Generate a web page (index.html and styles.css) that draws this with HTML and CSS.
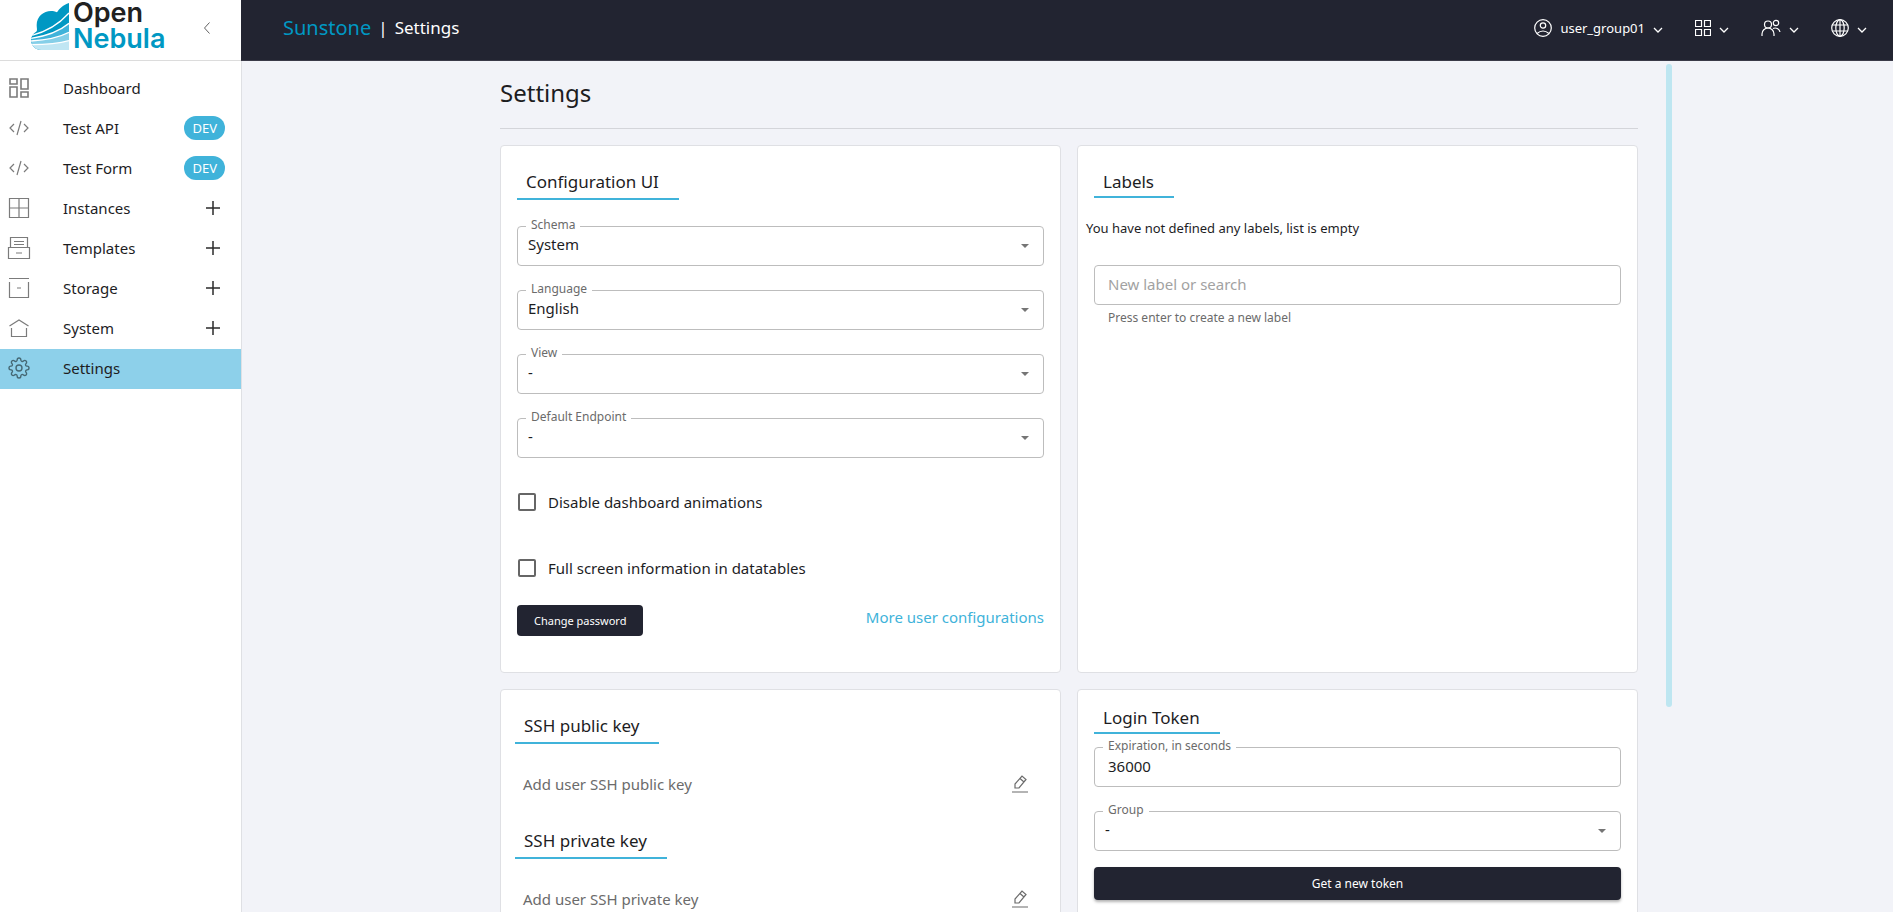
FILE: index.html
```html
<!DOCTYPE html>
<html lang="en">
<head>
<meta charset="utf-8">
<title>Settings | Sunstone</title>
<link rel="stylesheet" href="styles.css">
</head>
<body>
<svg class="sprite" aria-hidden="true">
  <symbol id="chevron" viewBox="0 0 10 6"><path d="M1 1l4 4 4-4"/></symbol>
  <symbol id="plus" viewBox="0 0 14 14"><path d="M7 0v14M0 7h14"/></symbol>
  <symbol id="code" viewBox="0 0 20 20"><path d="M5 6L1 10l4 4M15 6l4 4-4 4M12 3L8 17"/></symbol>
  <symbol id="edit" viewBox="0 0 16 18"><path d="M0 17h16M3 13V9l7-8 4 3.500L7 13zM8 3.500l4 3.500"/></symbol>
</svg>
<div class="app">
  <aside class="sidebar">
    <div class="brand">
      <a class="logo" href="#" aria-label="OpenNebula">
        <svg class="cloud" viewBox="93 9 114 141" aria-hidden="true">
          <defs><clipPath id="cloud-shape"><path d="M207 9C190 14 178 26 171 37C145 24 110 42 110 75C110 84 112 88 110 94C98 102 93 112 93 120C94 138 108 150 125 150H207Z"/></clipPath></defs>
          <g clip-path="url(#cloud-shape)">
            <path fill="#0098c3" d="M93 9h114v141H93z"/>
            <path fill="#40b3da" d="M93 115Q165 105 207 70v80H93z"/>
            <path fill="#85cfe8" d="M93 122Q165 119 207 97v53H93z"/>
            <path fill="#c0e6f3" d="M93 133Q165 134 207 122v28H93z"/>
            <path class="streak" d="M93 107Q162 90 207 39M93 115Q165 105 207 70M93 123Q165 119 207 97M93 134Q165 134 207 122"/>
          </g>
        </svg>
        <span class="wordmark"><span class="word-open">Open</span><span>Nebula</span></span>
      </a>
      <button class="collapse" type="button" aria-label="Collapse menu"><svg viewBox="0 0 6 12" width="6" height="12"><path d="M5.500 0.500L0.500 6l5 5.500"/></svg></button>
    </div>
    <nav class="menu">
      <a class="item" href="#"><svg class="thick" viewBox="0 0 20 20"><path d="M1 1h7v5H1zM12 1h7v10h-7zM1 9h7v10H1zM12 14h7v5h-7z"/></svg><span>Dashboard</span></a>
      <a class="item" href="#"><svg viewBox="0 0 20 20"><use href="#code"/></svg><span>Test API</span><span class="chip">DEV</span></a>
      <a class="item" href="#"><svg viewBox="0 0 20 20"><use href="#code"/></svg><span>Test Form</span><span class="chip">DEV</span></a>
      <a class="item" href="#"><svg viewBox="0 0 20 20"><path d="M.500.500h19v19H.500zM10 .500v19M.500 10h19"/></svg><span>Instances</span><svg class="plus" viewBox="0 0 14 14"><use href="#plus"/></svg></a>
      <a class="item" href="#"><svg viewBox="0 0 20 20"><path d="M1.500 9.500V-.500h17v10M-.500 9.500h21v11h-21zM7 15h6M5 3.500h10M5 6.500h10"/></svg><span>Templates</span><svg class="plus" viewBox="0 0 14 14"><use href="#plus"/></svg></a>
      <a class="item" href="#"><svg viewBox="0 0 20 20"><path d="M0 .500h20M.500 4v15.500h19V4M8 10h4"/></svg><span>Storage</span><svg class="plus" viewBox="0 0 14 14"><use href="#plus"/></svg></a>
      <a class="item" href="#"><svg viewBox="0 0 20 20"><path d="M.500 8L10 2l9.500 6M2.500 10v8.500h15V10"/></svg><span>System</span><svg class="plus" viewBox="0 0 14 14"><use href="#plus"/></svg></a>
      <a class="item active" href="#" aria-current="page"><svg viewBox="1 1 22 22"><circle cx="12" cy="12" r="3.300"/><path d="M19.400 15a1.650 1.650 0 0 0 .330 1.820l.060.060a2 2 0 1 1-2.830 2.830l-.060-.060a1.650 1.650 0 0 0-2.900 1.260V21a2 2 0 0 1-4 0v-.090a1.650 1.650 0 0 0-2.890-1.180l-.060.060a2 2 0 1 1-2.830-2.830l.060-.060A1.650 1.650 0 0 0 3.090 14H3a2 2 0 0 1 0-4h.090a1.650 1.650 0 0 0 1.180-2.890l-.060-.060a2 2 0 1 1 2.830-2.830l.060.060A1.650 1.650 0 0 0 10 3.090V3a2 2 0 0 1 4 0v.090a1.650 1.650 0 0 0 2.900 1.180l.060-.060a2 2 0 1 1 2.830 2.830l-.060.060A1.650 1.650 0 0 0 20.910 10H21a2 2 0 0 1 0 4h-.090a1.650 1.650 0 0 0-1.510 1z"/></svg><span>Settings</span></a>
    </nav>
  </aside>
  <div class="page">
    <header class="topbar">
      <div class="crumbs"><a href="#">Sunstone</a><span>|</span><span>Settings</span></div>
      <div class="actions">
        <button type="button"><svg class="i18" viewBox="0 0 18 18"><circle cx="9" cy="9" r="8.300"/><circle cx="9" cy="6.500" r="2.700"/><path d="M3 14.500q6-5 12 0"/></svg><span>user_group01</span><svg class="chev" viewBox="0 0 10 6"><use href="#chevron"/></svg></button>
        <button type="button" aria-label="Views"><svg class="i16" viewBox="1 1 16 16"><path d="M1.500 1.500h6v6h-6zM10.500 1.500h6v6h-6zM1.500 10.500h6v6h-6zM10.500 10.500h6v6h-6z"/></svg><svg class="chev" viewBox="0 0 10 6"><use href="#chevron"/></svg></button>
        <button type="button" aria-label="Groups"><svg class="i20" viewBox="0 0 20 18"><circle cx="7" cy="5.500" r="3.500"/><path d="M1 17v-2a6 6 0 0 1 12 0v2M12 9.500a5 5 0 0 1 7 3.500"/><circle cx="15" cy="4" r="2.700"/></svg><svg class="chev" viewBox="0 0 10 6"><use href="#chevron"/></svg></button>
        <button type="button" aria-label="Zone"><svg class="i18" viewBox="0 0 18 18"><circle cx="9" cy="9" r="8.300"/><ellipse cx="9" cy="9" rx="4.200" ry="8.300"/><path d="M9 1v16M1.500 6h15M1.500 12h15"/></svg><svg class="chev" viewBox="0 0 10 6"><use href="#chevron"/></svg></button>
      </div>
    </header>
    <div class="container">
      <span class="scroll-thumb"></span>
      <main class="content">
        <h1>Settings</h1>
        <div class="cards">
          <section class="card config">
            <h2>Configuration UI</h2>
            <div class="fields">
              <div class="field"><label for="schema">Schema</label><select id="schema"><option>System</option></select></div>
              <div class="field"><label for="language">Language</label><select id="language"><option>English</option></select></div>
              <div class="field"><label for="view">View</label><select id="view"><option>-</option></select></div>
              <div class="field"><label for="endpoint">Default Endpoint</label><select id="endpoint"><option>-</option></select></div>
            </div>
            <div class="checks">
              <label><input type="checkbox">Disable dashboard animations</label>
              <label><input type="checkbox">Full screen information in datatables</label>
            </div>
            <div class="card-footer">
              <button class="btn" type="button">Change password</button>
              <a href="#">More user configurations</a>
            </div>
          </section>
          <section class="card labels">
            <h2 class="tight">Labels</h2>
            <p>You have not defined any labels, list is empty</p>
            <div class="label-entry">
              <div class="field text"><input id="new-label" type="text" placeholder="New label or search" aria-describedby="label-help" aria-label="New label or search"></div>
              <small id="label-help">Press enter to create a new label</small>
            </div>
          </section>
          <section class="card keys">
            <h2>SSH public key</h2>
            <div class="key-row"><span>Add user SSH public key</span><button type="button" aria-label="Edit public key"><svg viewBox="0 0 16 18"><use href="#edit"/></svg></button></div>
            <h2>SSH private key</h2>
            <div class="key-row"><span>Add user SSH private key</span><button type="button" aria-label="Edit private key"><svg viewBox="0 0 16 18"><use href="#edit"/></svg></button></div>
          </section>
          <section class="card token">
            <h2 class="tight">Login Token</h2>
            <div class="fields">
              <div class="field text"><label for="expiration">Expiration, in seconds</label><input id="expiration" type="text" value="36000"></div>
              <div class="field"><label for="group">Group</label><select id="group"><option>-</option></select></div>
            </div>
            <button class="btn wide" type="button">Get a new token</button>
          </section>
        </div>
      </main>
    </div>
  </div>
</div>
</body>
</html>
```
FILE: styles.css
```css
* { box-sizing: border-box; }
body { margin: 0; font: 15px/24px "Noto Sans", "Open Sans", sans-serif; color: #1d1d1f; background: #f2f3f8; }
h1, h2, p { margin: 0; font-weight: 400; }
a { color: inherit; text-decoration: none; }
button { font: inherit; color: inherit; background: none; border: 0; padding: 0; cursor: pointer; }
svg { display: block; fill: none; stroke: currentColor; flex: none; }
.sprite { display: none; }

.app { display: flex; height: 100vh; overflow: hidden; }

.sidebar { flex: none; width: 241px; background: #fff; box-shadow: 1px 0 #dfe0e4; }
.brand { display: flex; justify-content: space-between; height: 61px; padding: 0 31px; border-bottom: 1px solid #dcdcdc; }
.logo { display: flex; gap: 4px; color: #0098c3; }
.cloud { width: 38px; height: 47px; margin-top: 3px; stroke: none; }
.logo .streak { stroke: #fff; stroke-width: 4; }
.wordmark { display: flex; flex-direction: column; font: 600 27px/26px Inter, sans-serif; }
.word-open { color: #212121; }
.collapse { color: #616161; height: 56px; }
.menu { padding: 8px 0; }
.item { display: flex; align-items: center; height: 40px; padding: 0 16px 2px 9px; }
.item > svg { width: 20px; height: 20px; margin-right: 34px; color: #7b7b7b; overflow: visible; stroke-width: 1.200; }
.item > .thick { stroke-width: 1.600; }
.item > .plus { width: 14px; height: 14px; margin: 0 5px 0 auto; color: #2b2b2b; stroke-width: 1.500; }
.chip { margin-left: auto; padding: 0 8px; border-radius: 12px; background: #40b3da; color: #fff; font-size: 13px; }
.item.active { background: #8dd0ea; }
.item.active > svg { color: #456874; stroke-width: 1.500; }

.page { flex: 1; min-width: 0; display: flex; flex-direction: column; }
.topbar { position: relative; flex: none; display: flex; justify-content: space-between; align-items: center; height: 61px; padding: 0 26px 5px 42px; background: #222431; border-bottom: 1px solid #3a3a48; color: #fff; }
.crumbs { display: flex; align-items: center; gap: 7px; font-size: 17px; }
.crumbs a { color: #0098c3; font-size: 20px; }
.actions { display: flex; gap: 32px; font-size: 13px; }
.actions button { display: flex; align-items: center; gap: 8px; }
.i16 { width: 16px; height: 16px; stroke-width: 1.200; }
.i18 { width: 18px; height: 18px; stroke-width: 1.200; }
.i20 { width: 20px; height: 18px; stroke-width: 1.200; }
.chev { width: 10px; height: 6px; margin-top: 4px; stroke-width: 1.300; }

.container { position: relative; flex: 1; min-height: 0; width: 100%; max-width: 1210px; margin: 0 auto; }
.scroll-thumb { position: absolute; top: 3px; right: 0; width: 6px; height: 75.5%; border-radius: 3px; background: #bee6f1; }
.content { height: 100%; overflow-y: auto; scrollbar-width: none; padding: 16px 34px 16px 38px; }
h1 { font-size: 24px; line-height: 32px; padding-bottom: 19px; border-bottom: 1px solid #d4d5da; }
.cards { display: grid; grid-template-columns: 1fr 1fr; gap: 16px; margin-top: 16px; }
.card { background: #fff; border: 1px solid #dfe0e4; border-radius: 4px; padding: 24px 16px 36px; }
h2 { width: fit-content; font-size: 17px; padding: 0 20px 4px 9px; border-bottom: 2px solid #40b3da; }
h2.tight { padding-bottom: 2px; }

.fields { display: grid; gap: 24px; }
.config .fields { margin-top: 26px; }
.field { position: relative; }
.field label { position: absolute; top: -9px; left: 9px; padding: 0 5px; background: #fff; color: #6b6b6b; font-size: 12px; line-height: 16px; }
.field select, .field input { display: block; width: 100%; height: 40px; border: 1px solid #bdbdbd; border-radius: 4px; padding: 0 10px 4px; background: #fff; color: inherit; font: inherit; appearance: none; }
.field input { padding: 0 13px 2px; }
.field input::placeholder { color: #a2a2a2; opacity: 1; }
.field:not(.text)::after { content: ""; position: absolute; top: 18px; right: 15px; border: 4px solid transparent; border-top-color: #757575; border-bottom: 0; }
.checks { display: grid; gap: 42px; margin-top: 32px; }
.checks label { display: flex; align-items: center; gap: 12px; }
.checks input { appearance: none; width: 18px; height: 18px; margin: 0 0 0 1px; border: 2px solid #666; border-radius: 2px; background: #fff; }
.card-footer { display: flex; justify-content: space-between; align-items: flex-start; margin-top: 25px; }
.card-footer a { color: #40b3da; }
.btn { height: 31px; padding: 0 17px; border-radius: 4px; background: #222431; color: #fff; font-size: 11px; }

.labels { padding: 24px 8px; }
.labels h2, .label-entry { margin: 0 8px; }
.labels p { margin: 20px 0 27px; font-size: 13px; line-height: 20px; }
.label-entry small { display: block; margin: 3px 14px 0; color: #6b6b6b; font-size: 12px; line-height: 20px; }

.keys { padding: 24px 14px; }
.key-row { display: flex; justify-content: space-between; align-items: center; margin: 28px 18px 33px 8px; color: #6b6b6b; }
.key-row svg { width: 16px; height: 18px; stroke-width: 1.200; }

.token { padding-top: 16px; }
.token .fields { margin: 13px 0 16px; }
.wide { display: block; width: 100%; height: 33px; font-size: 12px; box-shadow: 0 2px 3px #0000004d; }
```
